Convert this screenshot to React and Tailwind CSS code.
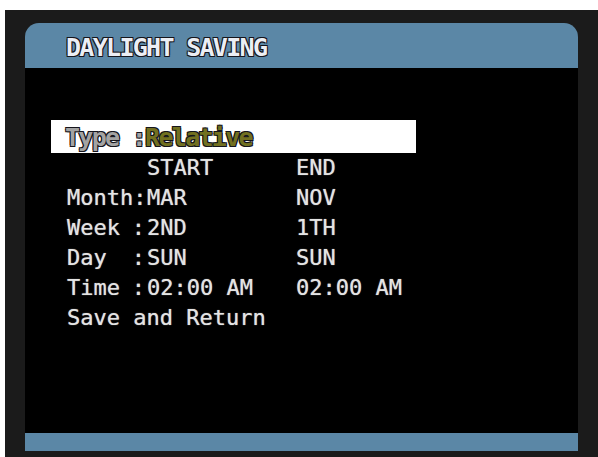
import React from 'react';

const rows = [
  { label: 'Month', sep: ':', start: 'MAR', end: 'NOV' },
  { label: 'Week', sep: ':', start: '2ND', end: '1TH' },
  { label: 'Day', sep: ':', start: 'SUN', end: 'SUN' },
  { label: 'Time', sep: ':', start: '02:00 AM', end: '02:00 AM' },
];

const outline =
  '[text-shadow:1px_1px_0_#15151c,-1px_-1px_0_#15151c,1px_-1px_0_#15151c,-1px_1px_0_#15151c]';

const App = () => {
  return (
    <div className="w-[598px] h-[457px] bg-white pl-[5px] pt-[10px] font-['DejaVu_Sans_Mono',monospace]">
      <div className="h-full bg-[#1b1b1b] px-[20px] pt-[13px] pb-[6px] flex flex-col">
        {/* title bar */}
        <div className="h-[45px] shrink-0 bg-[#5b87a6] rounded-t-[14px] pl-[41px] flex items-center">
          <span
            className={`text-[25px] leading-none font-bold tracking-[-1.7px] text-[#eceef4] mt-[3px] ${outline}`}
          >
            DAYLIGHT SAVING
          </span>
        </div>

        {/* body */}
        <div className="flex-1 bg-black pt-[52px]">
          <div className="ml-[26px] w-[365px] h-[33px] bg-white pl-[14px] flex items-center whitespace-pre">
            <span
              className={`text-[25px] leading-none font-bold tracking-[-1.7px] text-[#a3a3a3] mt-[1px] ${outline}`}
            >
              Type :
            </span>
            <span
              className={`text-[25px] leading-none font-bold tracking-[-1.7px] text-[#727020] mt-[1px] ${outline}`}
            >
              Relative
            </span>
          </div>

          <div className="pl-[42px] text-[22px] leading-[30px] text-[#e4e4e4] whitespace-pre [text-shadow:0_0_1px_#aaa]">
            <div className="flex">
              <span className="w-[80px]" />
              <span className="w-[149px]">START</span>
              <span>END</span>
            </div>
            {rows.map((r) => (
              <div key={r.label} className="flex">
                <span className="w-[80px] flex justify-between pr-[2px]">
                  <span>{r.label}</span>
                  <span>{r.sep}</span>
                </span>
                <span className="w-[149px]">{r.start}</span>
                <span>{r.end}</span>
              </div>
            ))}
            <div>Save and Return</div>
          </div>
        </div>

        {/* bottom bar */}
        <div className="h-[18px] shrink-0 bg-[#5b87a6]" />
      </div>
    </div>
  );
};

export default App;
